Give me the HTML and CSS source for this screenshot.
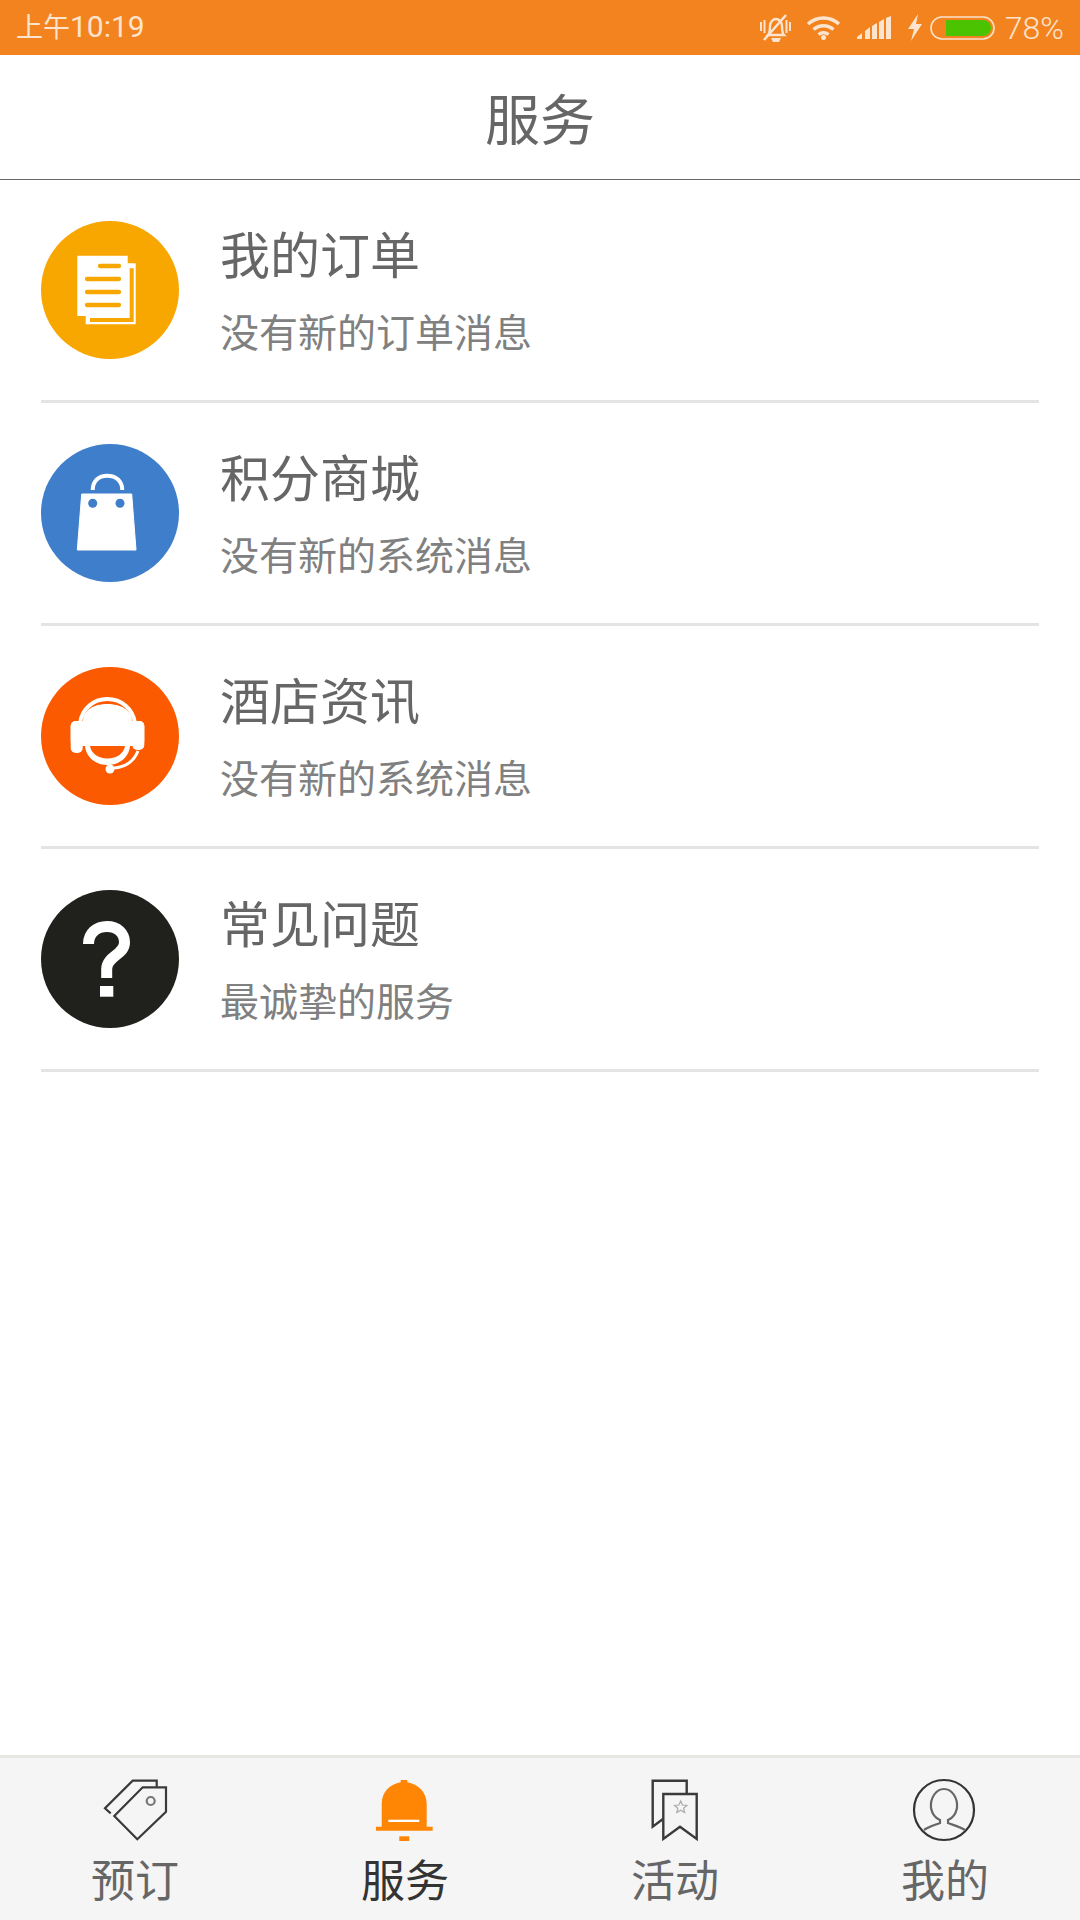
FILE: index.html
```html
<!DOCTYPE html>
<html lang="zh">
<head>
<meta charset="utf-8">
<title>服务</title>
<link rel="stylesheet" href="styles.css">
</head>
<body>
<div class="page">
  <div class="status">
    <span class="time"><span class="ampm">上午</span>10:19</span>
    <div class="status-icons">
      <svg class="si-bell" viewBox="0 0 33 30"><g fill="none" stroke="#fde4ce" stroke-width="2.400"><path d="M9 22c2-2 2-5 2-9 0-4 3-7 6-7 3 0 6 3 6 7 0 4 0 7 2 9z"/><path d="M5 27 27 2" stroke-width="2.600"/><path d="M2 9v9M5.500 7v13M31 9v9M27.500 7v13" stroke-width="2"/></g><path d="M12 25h10l-2 4h-6z" fill="#fde4ce"/></svg>
      <svg class="si-wifi" viewBox="0 0 35 25"><g fill="none" stroke="#fde4ce" stroke-width="3.400"><path d="M2 9c9-8 22-8 31 0"/><path d="M7.500 14.500c6-5 14-5 20 0"/><path d="M12.500 19.500c3-2.500 7-2.500 10 0"/></g><circle cx="17.500" cy="22.500" r="2.500" fill="#fde4ce"/></svg>
      <svg class="si-signal" viewBox="0 0 34 23"><path d="M0 23v-2l5-4v6zM8 23v-8l5-4v12zM15 23V10l5-3v16zM22 23V6l5-3v20zM29 23V2l5-2v23z" fill="#fde4ce"/></svg>
      <svg class="si-bolt" viewBox="0 0 16 27"><path d="M11 0 1 15h6l-3 12L15 10H9z" fill="#fde4ce"/></svg>
      <svg class="si-battery" viewBox="0 0 65 24"><rect x="1" y="1" width="63" height="22" rx="11" fill="none" stroke="#fde4ce" stroke-width="1.600"/><path d="M16 4h37a8 8 0 0 1 8 8 8 8 0 0 1-8 8H16z" fill="#4cc300"/></svg>
      <span class="pct">78%</span>
    </div>
  </div>
  <header class="header"><span class="header-title">服务</span></header>
  <main class="list">
    <div class="row">
      <svg class="badge" viewBox="0 0 138 138"><circle cx="69" cy="69" r="69" fill="#f8a600"/><path d="M36.300 34.700h50.400v7.600h8v61H44.700V95h-8.400z" fill="#fff"/><path d="M90.700 47.300V99H49" fill="none" stroke="#f8a600" stroke-width="4"/><g stroke="#f8a600" stroke-width="4.300" stroke-linecap="round"><path d="M59 45h19M46 58h32M46 71h32M46 84h32"/></g></svg>
      <div class="text"><div class="title">我的订单</div><div class="sub">没有新的订单消息</div></div>
    </div>
    <div class="row">
      <svg class="badge" viewBox="0 0 138 138"><circle cx="69" cy="69" r="69" fill="#3e7ecb"/><path d="M40.700 50h50l4.300 56H36.300z" fill="#fff" stroke="#fff" stroke-linejoin="round"/><path d="M51.700 46c0-9 6-14.300 14.600-14.300S81.300 37 81.300 46" fill="none" stroke="#fff" stroke-width="4"/><circle cx="51.700" cy="59.300" r="4.500" fill="#3e7ecb"/><circle cx="79" cy="59.300" r="4.500" fill="#3e7ecb"/></svg>
      <div class="text"><div class="title">积分商城</div><div class="sub">没有新的系统消息</div></div>
    </div>
    <div class="row">
      <svg class="badge" viewBox="0 0 138 138"><circle cx="69" cy="69" r="69" fill="#fc5a00"/><path d="M39 56C41 42 52 32 66.300 32S92 42 94 56" fill="none" stroke="#fff" stroke-width="4"/><path d="M42 54c0-11 11-17 24.300-17S91 43 91 54v25H42z" fill="#fff"/><rect x="29.700" y="54" width="73.600" height="25" rx="5" fill="#fff"/><rect x="29.700" y="54" width="12" height="32" rx="5" fill="#fff"/><rect x="91.300" y="54" width="12" height="29" rx="5" fill="#fff"/><path d="M44 79h45c-1 11-10 19-22.500 19S45 90 44 79z" fill="#fff"/><path d="M49 79h35c-1 7-8 12.500-17.500 12.500S50 86 49 79z" fill="#fc5a00"/><path d="M97 84c-4 10-12 16-24 17" fill="none" stroke="#fff" stroke-width="3"/><circle cx="69" cy="102" r="4.500" fill="#fff"/></svg>
      <div class="text"><div class="title">酒店资讯</div><div class="sub">没有新的系统消息</div></div>
    </div>
    <div class="row">
      <svg class="badge" viewBox="0 0 138 138"><circle cx="69" cy="69" r="69" fill="#20201c"/><path d="M47.500 54c0-11 8-17.500 18.500-17.500 10.500 0 17.500 6.500 17.500 16C83.500 65 65.700 66 65.700 79v9" fill="none" stroke="#fff" stroke-width="11"/><rect x="59" y="96" width="13.300" height="10.700" fill="#fff"/></svg>
      <div class="text"><div class="title">常见问题</div><div class="sub">最诚挚的服务</div></div>
    </div>
  </main>
  <nav class="nav">
    <div class="tab">
      <svg class="tab-icon" viewBox="0 0 80 64"><g fill="none" stroke="#3a3a3a" stroke-width="2.200"><path d="M61.700 8.700V2.700H37.700L10 30.300 15.700 35.300"/><path d="M47.700 9.300H71V33.700L42.300 61.300 19.300 38z"/></g><circle cx="55.700" cy="23" r="4" fill="none" stroke="#777" stroke-width="2.200"/></svg>
      <span class="tab-label">预订</span>
    </div>
    <div class="tab active">
      <svg class="tab-icon tab-icon-bell" viewBox="0 0 80 64"><path d="M36.700 2h6.600v2.300C54 6 62.700 14 62.700 26v22.700H68.700v4H12v-4h5.700V26C17.700 14 26 6 36.700 4.300z" fill="#ff8605"/><rect x="24.300" y="41.700" width="31" height="2.300" fill="#fff"/><rect x="35.300" y="58.300" width="10" height="4.700" fill="#ff8605"/></svg>
      <span class="tab-label">服务</span>
    </div>
    <div class="tab">
      <svg class="tab-icon" viewBox="0 0 80 64"><g fill="none" stroke="#3a3a3a" stroke-width="2.400"><path d="M51.700 15V2.700H17.700V48.700L28 41"/><path d="M28.300 16H61.700V61L45 48.700 28.300 61z"/></g><path d="m45.700 23 1.800 4 4.400.4-3.300 2.900 1 4.300-3.900-2.300-3.900 2.300 1-4.300-3.300-2.900 4.400-.4z" fill="none" stroke="#aaa" stroke-width="1.200"/></svg>
      <span class="tab-label">活动</span>
    </div>
    <div class="tab">
      <svg class="tab-icon" viewBox="0 0 80 64"><circle cx="39" cy="32" r="30" fill="none" stroke="#333" stroke-width="2.200"/><path d="M19 52c4-3 11-5 16-7v-3c-5-2-8-7-9-12-1-10 5-19 13-19s14 9 13 19c-1 5-4 10-9 12v3c5 2 13 4 17 7" fill="none" stroke="#666" stroke-width="2.200"/></svg>
      <span class="tab-label">我的</span>
    </div>
  </nav>
</div>
</body>
</html>
```

FILE: styles.css
```css
* { box-sizing: border-box; }
html, body { margin: 0; padding: 0; background: #fff; }
body { font-family: "Noto Sans CJK SC", "Noto Sans", sans-serif; }
.page { width: 1080px; height: 1920px; display: flex; flex-direction: column; }

.status { height: 55px; background: #f2831e; color: #fde4ce; display: flex; align-items: center; justify-content: space-between; padding: 0 16px 0 16px; font-size: 30px; }
.time { font-family: "Roboto", "Noto Sans CJK SC", sans-serif; font-weight: 400; line-height: 55px; }
.ampm { font-size: 27px; }
.status-icons { display: flex; align-items: center; }
.status-icons svg { display: block; }
.si-bell { width: 33px; height: 30px; margin-right: 14px; }
.si-wifi { width: 35px; height: 25px; margin-right: 16px; }
.si-signal { width: 34px; height: 23px; margin-right: 16px; }
.si-bolt { width: 16px; height: 27px; margin-right: 7px; }
.si-battery { width: 65px; height: 24px; margin-right: 10px; }
.pct { font-family: "Roboto", sans-serif; font-weight: 300; font-size: 32px; }

.header { height: 125px; border-bottom: 1px solid #666; display: flex; align-items: center; justify-content: center; font-size: 55px; color: #666; padding-bottom: 2px; }

.list { flex: 1; padding: 0 41px; }
.row { height: 223px; padding-top: 41px; border-bottom: 3px solid #e4e4e4; display: flex; align-items: flex-start; }
.badge { width: 138px; height: 138px; flex: none; margin-right: 41px; }
.text { display: flex; flex-direction: column; }
.title { font-size: 50px; line-height: 62px; color: #666; }
.sub { font-size: 39px; line-height: 52px; margin-top: 21px; color: #808080; }

.nav { height: 165px; background: #f5f5f5; border-top: 3px solid #e6e6e2; display: grid; grid-template-columns: repeat(4, 1fr); padding-top: 20px; }
.tab { display: flex; flex-direction: column; align-items: center; }
.tab-icon { width: 80px; height: 64px; display: block; }
.tab-icon-bell { margin-left: -2px; }
.tab-label { font-size: 44px; line-height: 60px; margin-top: 6px; color: #666; }
.active .tab-label { color: #333; }
```
